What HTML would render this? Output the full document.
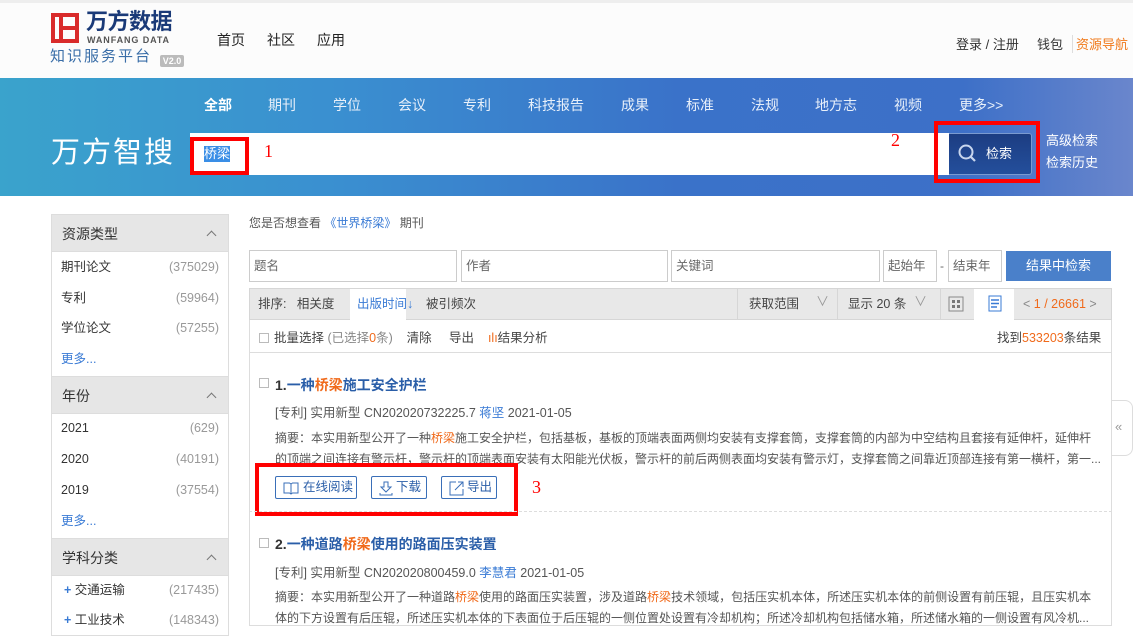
<!DOCTYPE html>
<html><head><meta charset="utf-8"><style>
*{margin:0;padding:0;box-sizing:border-box}
body{width:1133px;height:626px;overflow:hidden;background:#fff;font-family:"Liberation Sans","Noto Sans CJK SC",sans-serif;color:#333;position:relative;font-size:12px;line-height:16px}
.a{position:absolute;white-space:nowrap}
.top{position:absolute;left:0;top:0;width:1133px;height:3px;background:#eee}
.hdr{position:absolute;left:0;top:3px;width:1133px;height:75px;background:#fcfcfc}
.ban{position:absolute;left:0;top:78px;width:1133px;height:118px;background:linear-gradient(90deg,#3aa3cc 0%,#3a8fd0 30%,#3a72c9 60%,#3d70c8 85%,#6a86cc 100%)}
.nav span{position:absolute;top:97px;color:#e8f0fa;font-size:14px}
.side{position:absolute;left:51px;width:178px;border:1px solid #ddd;border-top:none}
.sh{position:absolute;left:51px;width:178px;height:38px;background:#e6e6e6;border:1px solid #ddd;font-size:14px;color:#333;padding:11px 0 0 10px}
.sh:after{content:"";position:absolute;right:13px;top:17px;width:6px;height:6px;border-left:1.5px solid #777;border-top:1.5px solid #777;transform:rotate(45deg)}
.it{position:absolute;left:61px;width:158px;font-size:12.5px;color:#333;line-height:16px}
.it b{position:absolute;right:0;top:0;font-weight:normal;color:#999}
.more{position:absolute;left:61px;font-size:12.5px;color:#3a7bd5}
.inp{position:absolute;top:250px;height:32px;border:1px solid #ccc;background:#fff;color:#666;font-size:12.5px;padding:7px 0 0 4px}
.btn{position:absolute;top:476px;height:23px;border:1px solid #3a6fb8;border-radius:2px;color:#2a5ea8;font-size:12.5px;line-height:21px;white-space:nowrap}
.btn svg{position:absolute;left:7px;top:4px}
.hl{color:#f06a1b}
.blue{color:#2a5ea8}
.red{position:absolute;border:4px solid #f00}
</style></head><body>
<div class="top"></div>
<div class="hdr"></div>
<!-- logo -->
<div class="a" style="left:51px;top:13px;width:28px;height:30px;border:4px solid #d92b2b"></div>
<div class="a" style="left:59px;top:13px;width:4px;height:30px;background:#d92b2b"></div>
<div class="a" style="left:63px;top:26px;width:12px;height:4px;background:#d92b2b"></div>
<div class="a" style="left:86px;top:9px;font-size:22px;line-height:26px;font-weight:bold;color:#1a3a78;letter-spacing:-0.5px">万方数据</div>
<div class="a" style="left:87px;top:35px;font-size:9px;line-height:11px;font-weight:bold;color:#555;letter-spacing:0.9px">WANFANG DATA</div>
<div class="a" style="left:50px;top:48px;font-size:15px;line-height:18px;color:#3a6ea8;letter-spacing:2px">知识服务平台</div>
<div class="a" style="left:160px;top:55px;width:24px;height:12px;background:#bbb;color:#fff;font-size:9px;font-weight:bold;text-align:center;line-height:12px;border-radius:2px">V2.0</div>
<div class="a" style="left:217px;top:32px;font-size:14px;color:#222">首页</div>
<div class="a" style="left:267px;top:32px;font-size:14px;color:#222">社区</div>
<div class="a" style="left:317px;top:32px;font-size:14px;color:#222">应用</div>
<div class="a" style="left:956px;top:37px;font-size:13px;color:#333">登录 / 注册</div>
<div class="a" style="left:1037px;top:37px;font-size:13px;color:#333">钱包</div>
<div class="a" style="left:1072px;top:35px;width:1px;height:18px;background:#ddd"></div>
<div class="a" style="left:1076px;top:37px;font-size:13px;color:#f07818">资源导航</div>
<!-- banner -->
<div class="ban"></div>
<div class="nav">
<span style="left:204px;font-weight:bold;color:#fff">全部</span><span style="left:268px">期刊</span><span style="left:333px">学位</span><span style="left:398px">会议</span><span style="left:463px">专利</span><span style="left:528px">科技报告</span><span style="left:621px">成果</span><span style="left:686px">标准</span><span style="left:751px">法规</span><span style="left:815px">地方志</span><span style="left:894px">视频</span><span style="left:959px">更多&gt;&gt;</span>
</div>
<div class="a" style="left:51px;top:136px;font-size:29px;line-height:34px;color:#fff;letter-spacing:2px">万方智搜</div>
<div class="a" style="left:190px;top:133px;width:760px;height:42px;background:#fff"></div>
<div class="a" style="left:204px;top:146px;font-size:13px;color:#fff;background:#3a8ee6;line-height:16px">桥梁</div>
<div class="red" style="left:190px;top:137px;width:59px;height:38px"></div>
<div class="a" style="left:264px;top:143px;font-size:18px;color:#f00;font-family:'Liberation Serif',serif">1</div>
<div class="a" style="left:891px;top:132px;font-size:18px;color:#f00;font-family:'Liberation Serif',serif">2</div>
<div class="a" style="left:949px;top:133px;width:83px;height:42px;background:linear-gradient(#1c3d82,#244f9c);border:1px solid #7a9ad0;border-left:none;border-radius:0 3px 3px 0"></div>
<svg class="a" style="left:957px;top:143px" width="22" height="22" viewBox="0 0 22 22"><circle cx="9" cy="9" r="6.5" fill="none" stroke="#c8d6ee" stroke-width="2"/><line x1="13.5" y1="13.5" x2="18" y2="18" stroke="#c8d6ee" stroke-width="2.2"/></svg>
<div class="a" style="left:986px;top:146px;font-size:13px;color:#fff">检索</div>
<div class="red" style="left:934px;top:121px;width:106px;height:62px"></div>
<div class="a" style="left:1046px;top:133px;font-size:13px;color:#fff">高级检索</div>
<div class="a" style="left:1046px;top:155px;font-size:13px;color:#fff">检索历史</div>
<!-- sidebar -->
<div class="sh" style="top:214px">资源类型</div>
<div class="side" style="top:252px;height:125px"></div>
<div class="it" style="top:259px">期刊论文<b>(375029)</b></div>
<div class="it" style="top:290px">专利<b>(59964)</b></div>
<div class="it" style="top:320px">学位论文<b>(57255)</b></div>
<div class="more" style="top:351px">更多...</div>
<div class="sh" style="top:376px">年份</div>
<div class="side" style="top:414px;height:125px"></div>
<div class="it" style="top:420px">2021<b>(629)</b></div>
<div class="it" style="top:451px">2020<b>(40191)</b></div>
<div class="it" style="top:482px">2019<b>(37554)</b></div>
<div class="more" style="top:513px">更多...</div>
<div class="sh" style="top:538px">学科分类</div>
<div class="side" style="top:576px;height:60px"></div>
<div class="it" style="top:582px"><span style="color:#3a7bd5;font-weight:bold;margin-left:3px">+</span> 交通运输<b>(217435)</b></div>
<div class="it" style="top:612px"><span style="color:#3a7bd5;font-weight:bold;margin-left:3px">+</span> 工业技术<b>(148343)</b></div>
<!-- main -->
<div class="a" style="left:249px;top:215px;font-size:12px;color:#555">您是否想查看 <span style="color:#3a7bd5">《世界桥梁》</span> 期刊</div>
<div class="inp" style="left:249px;width:208px">题名</div>
<div class="inp" style="left:461px;width:207px">作者</div>
<div class="inp" style="left:671px;width:209px">关键词</div>
<div class="inp" style="left:883px;width:54px">起始年</div>
<div class="a" style="left:940px;top:258px;color:#666">-</div>
<div class="inp" style="left:948px;width:54px">结束年</div>
<div class="a" style="left:1006px;top:251px;width:105px;height:30px;background:#4a80ca;color:#fff;font-size:13px;text-align:center;line-height:30px">结果中检索</div>
<div class="a" style="left:249px;top:288px;width:863px;height:32px;background:#e8e8e8;border:1px solid #d6d6d6"></div>
<div class="a" style="left:258px;top:296px;font-size:12.5px;color:#444">排序:&nbsp;&nbsp;&nbsp;相关度</div>
<div class="a" style="left:350px;top:289px;width:56px;height:31px;background:#fff"></div>
<div class="a" style="left:357px;top:296px;font-size:12.5px;color:#3a7bd5">出版时间↓</div>
<div class="a" style="left:426px;top:296px;font-size:12.5px;color:#444">被引频次</div>
<div class="a" style="left:737px;top:289px;width:1px;height:31px;background:#d6d6d6"></div>
<div class="a" style="left:749px;top:296px;font-size:12.5px;color:#444">获取范围</div>
<div class="a" style="left:816px;top:294px;font-size:13px;color:#999">∨</div>
<div class="a" style="left:837px;top:289px;width:1px;height:31px;background:#d6d6d6"></div>
<div class="a" style="left:848px;top:296px;font-size:12.5px;color:#444">显示 20 条</div>
<div class="a" style="left:914px;top:294px;font-size:13px;color:#999">∨</div>
<div class="a" style="left:940px;top:289px;width:1px;height:31px;background:#d6d6d6"></div>
<svg class="a" style="left:948px;top:296px" width="16" height="16"><rect x="1" y="1" width="14" height="14" fill="none" stroke="#888"/><rect x="4" y="4" width="3" height="3" fill="#777"/><rect x="9" y="4" width="3" height="3" fill="#777"/><rect x="4" y="9" width="3" height="3" fill="#777"/><rect x="9" y="9" width="3" height="3" fill="#777"/></svg>
<div class="a" style="left:974px;top:289px;width:40px;height:31px;background:#fff"></div>
<svg class="a" style="left:988px;top:295px" width="14" height="17"><rect x="1" y="1" width="12" height="15" fill="none" stroke="#3a7bd5"/><line x1="3" y1="5" x2="11" y2="5" stroke="#3a7bd5" stroke-width="1.5"/><line x1="3" y1="8.5" x2="11" y2="8.5" stroke="#3a7bd5" stroke-width="1.5"/><line x1="3" y1="12" x2="9" y2="12" stroke="#3a7bd5" stroke-width="1.5"/></svg>
<div class="a" style="left:1023px;top:296px;font-size:12.5px;color:#888">&lt; <span style="color:#f06a1b">1 / 26661</span> &gt;</div>
<div class="a" style="left:249px;top:320px;width:863px;height:306px;border:1px solid #ddd;border-top:none"></div>
<div class="a" style="left:249px;top:352px;width:863px;height:1px;background:#ddd"></div>
<div class="a" style="left:259px;top:333px;width:10px;height:10px;border:1px solid #bbb"></div>
<div class="a" style="left:274px;top:330px;font-size:12.5px;color:#444">批量选择 <span style="color:#888">(已选择<span style="color:#f06a1b">0</span>条)</span>&nbsp;&nbsp;&nbsp;&nbsp;清除&nbsp;&nbsp;&nbsp;&nbsp;&nbsp;导出&nbsp;&nbsp;&nbsp;&nbsp;<span style="color:#f06a1b">ılı</span>结果分析</div>
<div class="a" style="left:997px;top:330px;font-size:12.5px;color:#444">找到<span style="color:#f06a1b">533203</span>条结果</div>
<!-- item1 -->
<div class="a" style="left:259px;top:378px;width:10px;height:10px;border:1px solid #bbb"></div>
<div class="a blue" style="left:275px;top:377px;font-size:14px;font-weight:bold"><span style="color:#333">1.</span>一种<span class="hl">桥梁</span>施工安全护栏</div>
<div class="a" style="left:275px;top:405px;font-size:12.5px;color:#555">[专利] 实用新型 CN202020732225.7 <span style="color:#3a7bd5">蒋坚</span> 2021-01-05</div>
<div class="a" style="left:275px;top:430px;font-size:12px;color:#555;width:830px;overflow:hidden">摘要：本实用新型公开了一种<span class="hl">桥梁</span>施工安全护栏，包括基板，基板的顶端表面两侧均安装有支撑套筒，支撑套筒的内部为中空结构且套接有延伸杆，延伸杆</div>
<div class="a" style="left:275px;top:451px;font-size:12px;color:#555">的顶端之间连接有警示杆，警示杆的顶端表面安装有太阳能光伏板，警示杆的前后两侧表面均安装有警示灯，支撑套筒之间靠近顶部连接有第一横杆，第一...</div>
<div class="btn" style="left:275px;width:82px;padding-left:27px"><svg width="16" height="14"><path d="M1 2h5.5l1.5 1 1.5-1H15v10H9.5L8 13l-1.5-1H1z M8 3v10" fill="none" stroke="#3a6fb8"/></svg>在线阅读</div>
<div class="btn" style="left:371px;width:56px;padding-left:24px"><svg width="14" height="15"><path d="M5 1h4v5h3l-5 5-5-5h3z M1 12v2h12v-2" fill="none" stroke="#3a6fb8"/></svg>下载</div>
<div class="btn" style="left:441px;width:56px;padding-left:25px"><svg width="15" height="15"><path d="M7 1H1v13h13V8 M9 1h5v5 M14 1L6 9" fill="none" stroke="#3a6fb8"/></svg>导出</div>
<div class="red" style="left:255px;top:463px;width:263px;height:53px"></div>
<div class="a" style="left:532px;top:479px;font-size:18px;color:#f00;font-family:'Liberation Serif',serif">3</div>
<div class="a" style="left:249px;top:511px;width:863px;border-top:1px dashed #ddd"></div>
<!-- item2 -->
<div class="a" style="left:259px;top:538px;width:10px;height:10px;border:1px solid #bbb"></div>
<div class="a blue" style="left:275px;top:536px;font-size:14px;font-weight:bold"><span style="color:#333">2.</span>一种道路<span class="hl">桥梁</span>使用的路面压实装置</div>
<div class="a" style="left:275px;top:565px;font-size:12.5px;color:#555">[专利] 实用新型 CN202020800459.0 <span style="color:#3a7bd5">李慧君</span> 2021-01-05</div>
<div class="a" style="left:275px;top:589px;font-size:12px;color:#555">摘要：本实用新型公开了一种道路<span class="hl">桥梁</span>使用的路面压实装置，涉及道路<span class="hl">桥梁</span>技术领域，包括压实机本体，所述压实机本体的前侧设置有前压辊，且压实机本</div>
<div class="a" style="left:275px;top:610px;font-size:12px;color:#555">体的下方设置有后压辊，所述压实机本体的下表面位于后压辊的一侧位置处设置有冷却机构；所述冷却机构包括储水箱，所述储水箱的一侧设置有风冷机...</div>
<!-- side tab -->
<div class="a" style="left:1112px;top:400px;width:21px;height:56px;background:#fff;border:1px solid #ddd;border-left:none;border-radius:0 8px 8px 0"></div>
<div class="a" style="left:1115px;top:419px;font-size:13px;color:#999">«</div>
</body></html>
